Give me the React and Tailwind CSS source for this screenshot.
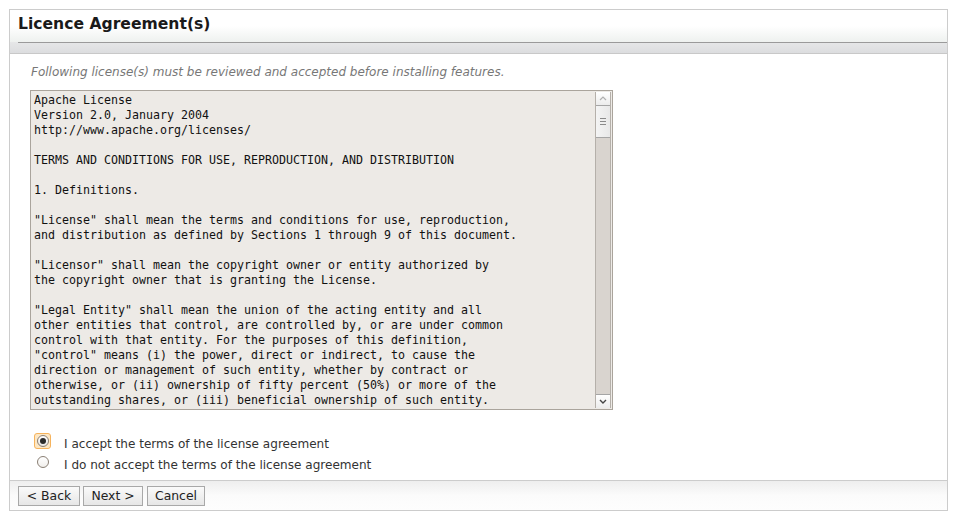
import React from "react";

const LINES = [
  "Apache License",
  "Version 2.0, January 2004",
  "http://www.apache.org/licenses/",
  "",
  "TERMS AND CONDITIONS FOR USE, REPRODUCTION, AND DISTRIBUTION",
  "",
  "1. Definitions.",
  "",
  "\"License\" shall mean the terms and conditions for use, reproduction,",
  "and distribution as defined by Sections 1 through 9 of this document.",
  "",
  "\"Licensor\" shall mean the copyright owner or entity authorized by",
  "the copyright owner that is granting the License.",
  "",
  "\"Legal Entity\" shall mean the union of the acting entity and all",
  "other entities that control, are controlled by, or are under common",
  "control with that entity. For the purposes of this definition,",
  "\"control\" means (i) the power, direct or indirect, to cause the",
  "direction or management of such entity, whether by contract or",
  "otherwise, or (ii) ownership of fifty percent (50%) or more of the",
  "outstanding shares, or (iii) beneficial ownership of such entity.",
];

function Button({ children, w }) {
  return (
    <button
      className={`${w} h-[20px] border border-[#a8a8a8] bg-gradient-to-b from-[#fafafa] to-[#e6e6e6] text-[12.4px] leading-[18px] text-[#222] [font-family:'DejaVu_Sans',sans-serif] flex items-center justify-center`}
    >
      {children}
    </button>
  );
}

export default function App() {
  return (
    <div className="w-[957px] h-[520px] bg-white [font-family:'DejaVu_Sans',sans-serif]">
      <div className="ml-[9px] pt-[9px]">
        <div className="w-[939px] h-[502px] border border-[#cccccc] flex flex-col">
          {/* header */}
          <div className="h-[32px] bg-gradient-to-b from-white via-white to-[#eef1ef] pl-[8px] flex items-center">
            <span className="text-[15.6px] font-bold text-[#1a1a1a] leading-none mt-[-3px]">
              Licence Agreement(s)
            </span>
          </div>
          <div className="h-[12px] bg-gradient-to-b from-[#e6e7e8] to-[#dcdddf] border-b border-[#c8c8c8]">
            <div className="ml-[8px] h-px bg-[#9a9a9a]" />
          </div>
          {/* content */}
          <div className="flex-1 flex flex-col">
            <div className="pl-[21px] pt-[11px] h-[36px] text-[12px] italic text-[#777] leading-[15px]">
              Following license(s) must be reviewed and accepted before installing features.
            </div>
            <div className="ml-[20px] w-[583px] h-[320px] border border-[#aaa49c] bg-[#edeae6] flex">
              <div className="flex-1 pl-[3px] pt-[2px] overflow-hidden [font-family:'DejaVu_Sans_Mono',monospace] text-[11.63px] leading-[15px] text-[#111] whitespace-pre">
                {LINES.map((l, i) => (
                  <div key={i} className="h-[15px]">{l}</div>
                ))}
              </div>
              <div className="w-[16px] mr-[1px] my-[1px] flex flex-col bg-[#d9d4cf] border-x border-[#b5b0aa]">
                <div className="h-[14px] bg-gradient-to-b from-white to-[#ececec] border-b border-[#a5a5a5] flex items-center justify-center">
                  <svg width="8" height="5" viewBox="0 0 8 5">
                    <path d="M1 4 L4 1 L7 4" fill="none" stroke="#b0b0b0" strokeWidth="1.2" />
                  </svg>
                </div>
                <div className="h-[32px] bg-gradient-to-r from-[#f4f4f4] to-[#e8e8e8] border-b border-[#a5a5a5] flex flex-col items-center justify-center gap-[2px]">
                  <div className="w-[6px] h-px bg-[#8a8a8a]" />
                  <div className="w-[6px] h-px bg-[#8a8a8a]" />
                  <div className="w-[6px] h-px bg-[#8a8a8a]" />
                </div>
                <div className="flex-1" />
                <div className="h-[14px] bg-gradient-to-b from-white to-[#ececec] border-t border-[#a5a5a5] flex items-center justify-center">
                  <svg width="8" height="5" viewBox="0 0 8 5">
                    <path d="M1 1 L4 4 L7 1" fill="none" stroke="#444" strokeWidth="1.4" />
                  </svg>
                </div>
              </div>
            </div>
            {/* radios */}
            <div className="mt-[23px] flex flex-col text-[12.05px] text-[#333] leading-[21px]">
              <div className="flex items-start h-[21px]">
                <div className="ml-[24px] w-[17px] h-[16px] rounded-[3px] border border-[#f6b35c] bg-[#fde7c4] flex items-center justify-center">
                  <div className="w-[12px] h-[12px] rounded-full border border-[#8a7f74] bg-gradient-to-b from-white to-[#e9e6e2] flex items-center justify-center">
                    <div className="w-[6px] h-[6px] rounded-full bg-[#2a2a2a]" />
                  </div>
                </div>
                <span className="ml-[13px] mt-[1px]">I accept the terms of the license agreement</span>
              </div>
              <div className="flex items-start h-[21px]">
                <div className="ml-[24px] w-[17px] h-[16px] flex items-center justify-center">
                  <div className="w-[12px] h-[12px] rounded-full border border-[#8a7f74] bg-gradient-to-b from-white to-[#f1efec]" />
                </div>
                <span className="ml-[13px] mt-[1px]">I do not accept the terms of the license agreement</span>
              </div>
            </div>
          </div>
          {/* footer */}
          <div className="h-[30px] border-t border-[#cccccc] bg-gradient-to-b from-[#eeeeee] via-[#fbfbfb] to-[#fdfdfd] flex items-start pt-[5px] pl-[8px]">
            <Button w="w-[62px]">&lt; Back</Button>
            <div className="w-[3px]" />
            <Button w="w-[60px]">Next &gt;</Button>
            <div className="w-[4px]" />
            <Button w="w-[58px]">Cancel</Button>
          </div>
        </div>
      </div>
    </div>
  );
}
